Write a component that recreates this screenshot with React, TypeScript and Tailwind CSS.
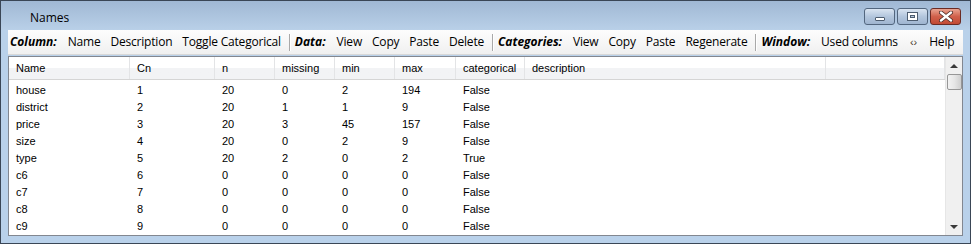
import React from 'react';

const columns = [
  { key: 'name', label: 'Name', width: 121 },
  { key: 'cn', label: 'Cn', width: 85 },
  { key: 'n', label: 'n', width: 60 },
  { key: 'missing', label: 'missing', width: 60 },
  { key: 'min', label: 'min', width: 60 },
  { key: 'max', label: 'max', width: 61 },
  { key: 'categorical', label: 'categorical', width: 69 },
  { key: 'description', label: 'description', width: 301 },
];

const rows = [
  ['house', '1', '20', '0', '2', '194', 'False', ''],
  ['district', '2', '20', '1', '1', '9', 'False', ''],
  ['price', '3', '20', '3', '45', '157', 'False', ''],
  ['size', '4', '20', '0', '2', '9', 'False', ''],
  ['type', '5', '20', '2', '0', '2', 'True', ''],
  ['c6', '6', '0', '0', '0', '0', 'False', ''],
  ['c7', '7', '0', '0', '0', '0', 'False', ''],
  ['c8', '8', '0', '0', '0', '0', 'False', ''],
  ['c9', '9', '0', '0', '0', '0', 'False', ''],
];

const toolbar: { label: string; items: string[] }[] = [
  { label: 'Column:', items: ['Name', 'Description', 'Toggle Categorical'] },
  { label: 'Data:', items: ['View', 'Copy', 'Paste', 'Delete'] },
  { label: 'Categories:', items: ['View', 'Copy', 'Paste', 'Regenerate'] },
  { label: 'Window:', items: ['Used columns', '\u2039\u203a', 'Help'] },
];

const CaptionButton: React.FC<{ kind: 'min' | 'max' | 'close' }> = ({ kind }) => {
  const close = kind === 'close';
  return (
    <div
      className={
        'h-[17px] flex items-center justify-center rounded-[3px] border ' +
        (close
          ? 'w-[31px] border-[#6b2b24] bg-gradient-to-b from-[#e8a391] via-[#d0604b] to-[#c24a34]'
          : 'w-[31px] border-[#52667e] bg-gradient-to-b from-[#d9e4f1] via-[#b3c6dd] to-[#9fb5d0]')
      }
    >
      {kind === 'min' && <div className="w-[10px] h-[4px] bg-white border border-[#4d5d70] rounded-[1px] mt-[5px]" />}
      {kind === 'max' && (
        <div className="w-[11px] h-[9px] border border-[#4d5d70] bg-white flex items-center justify-center">
          <div className="w-[5px] h-[3px] border border-[#4d5d70] bg-[#b8c8dc]" />
        </div>
      )}
      {kind === 'close' && (
        <svg width="14" height="11" viewBox="0 0 14 11">
          <path d="M2 1.5 L12 9.5 M12 1.5 L2 9.5" stroke="#4a2a26" strokeWidth="4" strokeLinecap="round" />
          <path d="M2 1.5 L12 9.5 M12 1.5 L2 9.5" stroke="#ffffff" strokeWidth="2.4" strokeLinecap="round" />
        </svg>
      )}
    </div>
  );
};

export default function App() {
  return (
    <div className="w-[971px] h-[244px] bg-[#b9d1ea] border border-[#3a4656] flex flex-col overflow-hidden">
      {/* title bar */}
      <div className="h-[29px] shrink-0 flex items-center pl-[29px] pr-[9px] bg-gradient-to-b from-[#a0b8d4] to-[#b9d0e8]">
        <span className="text-[12px] text-black font-['Open_Sans',sans-serif] mt-[4px]">Names</span>
        <div className="ml-auto flex items-center gap-[2px] mt-[2px]">
          <CaptionButton kind="min" />
          <CaptionButton kind="max" />
          <CaptionButton kind="close" />
        </div>
      </div>

      <div className="flex-1 flex flex-col px-[7px] pb-[7px]">
        {/* toolbar */}
        <div className="h-[25px] shrink-0 flex items-center pl-[2px] bg-gradient-to-b from-[#fdfdfd] to-[#f0f0f0] border-b border-[#d8d8d8] text-[12px] text-black font-['Open_Sans',sans-serif] tracking-[-0.2px]">
          {toolbar.map((group, gi) => (
            <React.Fragment key={group.label}>
              {gi > 0 && <div className="w-px h-[17px] bg-[#a9a9a9] border-r border-white ml-[8px] mr-[4px] box-content" />}
              <div className="flex items-center gap-[10px]">
                <span className="font-bold italic tracking-normal pr-[1px]">{group.label}</span>
                {group.items.map((it) => (
                  <span
                    key={it}
                    className={
                      it === '\u2039\u203a'
                        ? "font-['Liberation_Sans',Arial,sans-serif] text-[11px] px-[2px] tracking-normal text-[#4a3a2a]"
                        : ''
                    }
                  >
                    {it}
                  </span>
                ))}
              </div>
            </React.Fragment>
          ))}
        </div>

        {/* grid */}
        <div className="mt-[1px] flex-1 border border-[#828790] bg-white flex overflow-hidden font-['Liberation_Sans',Arial,sans-serif] text-[11px] text-black">
          <div className="flex-1 flex flex-col">
            <div className="h-[23px] shrink-0 flex border-b border-[#d5d5d5] bg-gradient-to-b from-white from-50% to-[#f2f3f5] to-50%">
              {columns.map((c) => (
                <div
                  key={c.key}
                  className="shrink-0 flex items-center pl-[7px] border-r border-[#e3e4e6]"
                  style={{ width: c.width }}
                >
                  {c.label}
                </div>
              ))}
              <div className="flex-1 border-r border-[#e3e4e6] w-[119px] shrink-0" />
            </div>
            <div className="pt-[2px] flex flex-col">
              {rows.map((r, ri) => (
                <div key={ri} className="h-[17px] shrink-0 flex items-center">
                  {r.map((v, ci) => (
                    <div key={ci} className="shrink-0 pl-[7px]" style={{ width: columns[ci].width }}>
                      {v}
                    </div>
                  ))}
                </div>
              ))}
            </div>
          </div>

          {/* scrollbar */}
          <div className="w-[17px] shrink-0 bg-[#f0f0f0] border-l border-[#e6e6e6] flex flex-col items-center">
            <div className="h-[17px] w-full flex items-center justify-center">
              <div className="w-0 h-0 border-l-[4px] border-r-[4px] border-b-[4px] border-l-transparent border-r-transparent border-b-[#3a3a3a]" />
            </div>
            <div className="w-[15px] h-[16px] rounded-[2px] border border-[#979797] bg-gradient-to-r from-[#f3f3f3] via-[#e6e6e6] to-[#cfcfcf]" />
            <div className="flex-1" />
            <div className="h-[17px] w-full flex items-center justify-center">
              <div className="w-0 h-0 border-l-[4px] border-r-[4px] border-t-[4px] border-l-transparent border-r-transparent border-t-[#3a3a3a]" />
            </div>
          </div>
        </div>
      </div>
    </div>
  );
}
